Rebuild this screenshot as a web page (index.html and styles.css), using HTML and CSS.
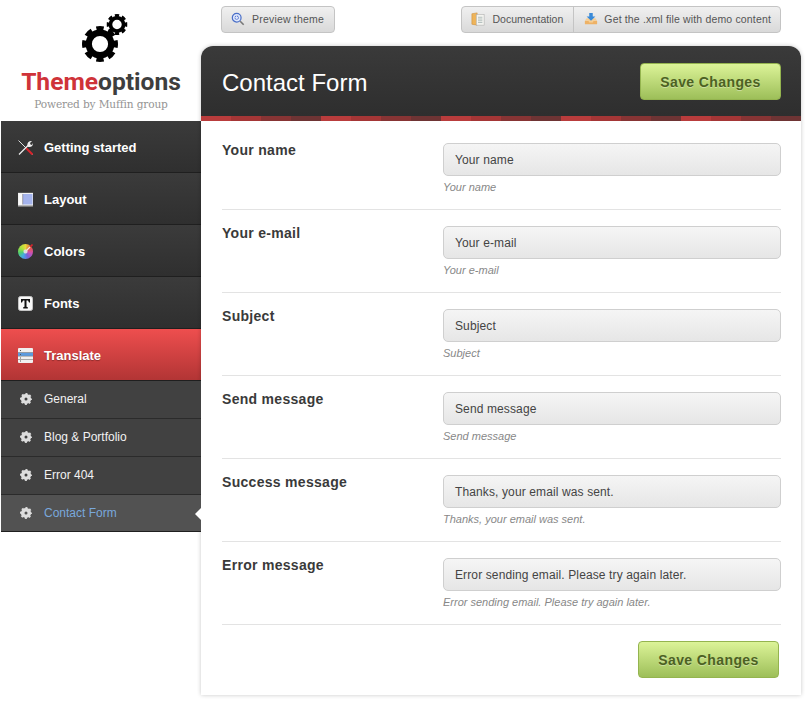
FILE: index.html
```html
<!DOCTYPE html>
<html lang="en">
<head>
<meta charset="utf-8">
<title>Theme options</title>
<link rel="stylesheet" href="styles.css">
</head>
<body>
<svg class="defs" width="0" height="0" aria-hidden="true">
  <defs>
    <symbol id="gear" viewBox="0 0 40 40">
      <circle cx="20" cy="20" r="12.5" fill="none" stroke="currentColor" stroke-width="7"/>
      <circle cx="20" cy="20" r="16.5" fill="none" stroke="currentColor" stroke-width="7" pathLength="80" stroke-dasharray="6 4" stroke-dashoffset="3"/>
    </symbol>
    <symbol id="subgear" viewBox="0 0 40 40">
      <circle cx="20" cy="20" r="11" fill="none" stroke="currentColor" stroke-width="12"/>
      <circle cx="20" cy="20" r="16.5" fill="none" stroke="currentColor" stroke-width="7" pathLength="80" stroke-dasharray="5 5" stroke-dashoffset="2.5"/>
    </symbol>
  </defs>
</svg>
<div class="page">
  <aside class="sidebar">
    <div class="logo">
      <svg class="logo-gears" width="60" height="52" viewBox="0 0 60 52">
        <use href="#gear" x="4" y="13" width="36" height="36"/>
        <use href="#gear" x="28.500" y="1" width="21" height="21"/>
      </svg>
      <div class="logo-name"><span class="logo-red">Theme</span>options</div>
      <div class="logo-sub">Powered by Muffin group</div>
    </div>
    <nav class="menu">
      <a class="item">
        <svg class="icon" viewBox="0 0 15 15"><path d="M.5.5l14 14" stroke="#ddd" stroke-width="1"/><path d="M8 8l6.500 6.500" stroke="#d8242c" stroke-width="2"/><path d="M1 14.500L10 5.500" stroke="#eee" stroke-width="1.300"/><path d="M9.500 6.500C8.500 3 11 .5 14 1l-2 2 .5 1.500L14 5l1-2c.500 3-2.500 5-5.500 3.500z" fill="#eee"/></svg>
        <span>Getting started</span>
      </a>
      <a class="item">
        <svg class="icon" viewBox="0 0 15 15"><rect width="15" height="15" fill="#f2f2f2"/><rect y="0" width="15" height="1" fill="#555"/><rect x="1" y="2" width="3.500" height="10.500" fill="#fafafa"/><rect x="5" y="2" width="9.500" height="10.500" fill="#a4b3ec"/><rect x="4.500" y="2" width=".6" height="10.500" fill="#667"/><rect y="13.500" width="15" height="1.500" fill="#777"/></svg>
        <span>Layout</span>
      </a>
      <a class="item">
        <span class="wheel">
          <svg class="brush" viewBox="0 0 15 15"><path d="M8 7l4.500-4.500" stroke="#f0e8d8" stroke-width="1.300"/><path d="M12 3l2.500-2.500" stroke="#d8242c" stroke-width="1.600"/></svg>
        </span>
        <span>Colors</span>
      </a>
      <a class="item">
        <svg class="icon" viewBox="0 0 15 15"><rect x=".5" y=".5" width="14" height="14" rx="2" fill="#f8f8f8" stroke="#c4c4c4"/><path d="M3 3h9v3.500h-1L10 4.500H8.500v6.300l1.300.5V12.500H5.200v-1.200l1.300-.5V4.500H5L4 6.500H3z" fill="#111"/></svg>
        <span>Fonts</span>
      </a>
      <a class="item item-active">
        <svg class="icon" viewBox="0 0 15 15"><rect width="15" height="15" rx="1" fill="#f0f0f0"/><rect y="4.500" width="15" height="3.500" fill="#5a9be0"/><path d="M0 4.500h15M0 8.200h15M0 11.500h15" stroke="#888" stroke-width=".7"/><path d="M2 2.500h1M2 6.500h1M2 10h1M2 13h1" stroke="#555"/></svg>
        <span>Translate</span>
      </a>
      <a class="sub"><svg class="sub-gear"><use href="#subgear"/></svg><span>General</span></a>
      <a class="sub"><svg class="sub-gear"><use href="#subgear"/></svg><span>Blog &amp; Portfolio</span></a>
      <a class="sub"><svg class="sub-gear"><use href="#subgear"/></svg><span>Error 404</span></a>
      <a class="sub sub-current"><svg class="sub-gear"><use href="#subgear"/></svg><span>Contact Form</span><i class="arrow"></i></a>
    </nav>
  </aside>

  <main class="content">
    <div class="topbar">
      <a class="tbtn">
        <svg class="ticon" viewBox="0 0 16 16"><circle cx="6.500" cy="6.500" r="5" fill="#dfe8fb" stroke="#4a6fc8" stroke-width="1.400"/><circle cx="6.500" cy="6.500" r="2" fill="none" stroke="#2a4fc0" stroke-dasharray="2 1"/><path d="M10.500 10.500l4 4" stroke="#777" stroke-width="1.800"/></svg>
        <span>Preview theme</span>
      </a>
      <div class="tgroup">
        <a class="tbtn tbtn-join">
          <svg class="ticon" viewBox="0 0 16 16"><path d="M1 2l6-1v14l-6-1z" fill="#eeb45a" stroke="#c98a35" stroke-width=".6"/><rect x="6" y="3" width="9" height="12" fill="#f4f4f0" stroke="#aaa" stroke-width=".6"/><path d="M8 6h5M8 8h5M8 10h5M8 12h5" stroke="#9aa" stroke-width=".8"/></svg>
          <span>Documentation</span>
        </a>
        <a class="tbtn tbtn-join">
          <svg class="ticon" viewBox="0 0 16 16"><path d="M1 10h14v4H1z" fill="#eeb266"/><path d="M3 7h10l2 3h-4l-1 2H6L5 10H1z" fill="#f6cf96"/><path d="M6 1h4v4h3l-5 5-5-5h3z" fill="#3a8ad8"/></svg>
          <span>Get the .xml file with demo content</span>
        </a>
      </div>
    </div>

    <section class="panel">
      <header class="phead">
        <h1>Contact Form</h1>
        <button class="save" type="button">Save Changes</button>
      </header>
      <div class="stripe"></div>
      <form class="form">
        <div class="row">
          <label>Your name</label>
          <div class="field"><div class="input">Your name</div><div class="hint">Your name</div></div>
        </div>
        <div class="row">
          <label>Your e-mail</label>
          <div class="field"><div class="input">Your e-mail</div><div class="hint">Your e-mail</div></div>
        </div>
        <div class="row">
          <label>Subject</label>
          <div class="field"><div class="input">Subject</div><div class="hint">Subject</div></div>
        </div>
        <div class="row">
          <label>Send message</label>
          <div class="field"><div class="input">Send message</div><div class="hint">Send message</div></div>
        </div>
        <div class="row">
          <label>Success message</label>
          <div class="field"><div class="input">Thanks, your email was sent.</div><div class="hint">Thanks, your email was sent.</div></div>
        </div>
        <div class="row">
          <label>Error message</label>
          <div class="field"><div class="input">Error sending email. Please try again later.</div><div class="hint">Error sending email. Please try again later.</div></div>
        </div>
        <div class="foot"><button class="save" type="button">Save Changes</button></div>
      </form>
    </section>
  </main>
</div>
</body>
</html>
```
FILE: styles.css
```css
* { box-sizing: border-box; }
html, body { margin: 0; padding: 0; background: #fff; }
body { font-family: "Liberation Sans", Arial, sans-serif; color: #333; }
.defs { position: absolute; }
.page { display: flex; align-items: flex-start; width: 808px; height: 703px; padding-left: 1px; overflow: hidden; }

.sidebar { width: 200px; flex: none; }
.logo { height: 121px; display: flex; flex-direction: column; align-items: center; }
.logo-gears { margin-top: 13px; margin-left: 14px; color: #000; display: block; }
.logo-name { font: 700 24.600px/28px Roboto, "Liberation Sans", sans-serif; color: #3e3e3e; margin-top: 3px; }
.logo-red { color: #cf3339; }
.logo-sub { font: 10.600px/14px "DejaVu Serif", serif; color: #949494; margin-top: 1px; letter-spacing: -0.15px; }

.menu { display: flex; flex-direction: column; }
.item { display: flex; align-items: center; gap: 11px; height: 52px; padding: 1px 0 0 17px; background: linear-gradient(#3b3b3b, #2f2f2f); border-bottom: 1px solid #1f1f1f; color: #fff; font-size: 13px; font-weight: 700; }
.item .icon { width: 15px; height: 15px; flex: none; }
.wheel { position: relative; width: 15px; height: 15px; flex: none; border-radius: 50%; background: radial-gradient(circle, #ddd 0 1.500px, transparent 2.500px), conic-gradient(#e8d93a, #e85a40, #d050b0, #7a60d8, #45a8e8, #50d070, #a8e040, #e8d93a); }
.brush { position: absolute; inset: 0; width: 15px; height: 15px; }
.item-active { background: linear-gradient(#ee4e4e, #b23535); text-shadow: 0 1px 1px rgba(0,0,0,.3); }
.sub { position: relative; display: flex; align-items: center; gap: 12px; height: 38px; padding: 0 0 1px 19px; background: #414141; border-bottom: 1px solid #2b2b2b; color: #f2f2f2; font-size: 12px; }
.sub-gear { width: 12px; height: 12px; color: #ddd; flex: none; }
.sub-current { background: #525252; color: #79a8dc; height: 37px; border-bottom-color: #1f1f1f; }
.arrow { position: absolute; right: 0; top: 13px; border: 6px solid transparent; border-right-color: #fff; border-left-width: 0; }

.content { width: 600px; flex: none; }
.topbar { height: 46px; padding: 6px 20px 0; display: flex; justify-content: space-between; align-items: flex-start; }
.tgroup { display: flex; border: 1px solid #c4c4c4; border-radius: 4px; background: linear-gradient(#f0f0f0, #d9d9d9); }
.tbtn { display: flex; align-items: center; gap: 7px; height: 27px; padding: 0 10px 1px 9px; border: 1px solid #c4c4c4; border-radius: 4px; background: linear-gradient(#f0f0f0, #d9d9d9); color: #555; font-size: 10.500px; letter-spacing: .2px; }
.tbtn-join { height: 25px; border: 0; border-radius: 0; background: none; letter-spacing: .02px; }
.tbtn-join + .tbtn-join { border-left: 1px solid #c4c4c4; gap: 6px; padding: 0 9px 1px 10px; letter-spacing: .16px; }
.ticon { width: 14px; height: 14px; flex: none; }

.panel { height: 649px; background: #fff; border-radius: 12px 12px 0 0; box-shadow: 0 0 4px rgba(0,0,0,.22); }
.phead { height: 70px; padding: 0 20px 0 21px; display: flex; align-items: center; justify-content: space-between; background: linear-gradient(#3a3a3a, #2e2e2e); border-radius: 12px 12px 0 0; }
.phead h1 { margin: 0; padding-top: 4px; font-size: 24px; font-weight: 400; color: #fff; }
.stripe { height: 5px; background: repeating-linear-gradient(90deg, #b93c3c 0 30px, #a53636 30px 60px, #873434 60px 90px, #6e3434 90px 120px); }
.save { width: 141px; height: 37px; border: 1px solid #94b44f; border-radius: 4px; background: linear-gradient(#dcf398, #9dbf59); color: #4c6123; font: 700 14px "Liberation Sans", sans-serif; letter-spacing: .4px; text-shadow: 0 1px 0 rgba(255,255,255,.35); padding: 1px 0 0; }

.form { padding: 6px 20px 0 21px; }
.row { display: flex; height: 83px; border-bottom: 1px solid #e3e3e3; padding-top: 16px; }
.row label { width: 221px; flex: none; margin-top: -1px; font-size: 14px; line-height: 16px; font-weight: 700; color: #3a3a3a; letter-spacing: .3px; }
.field { flex: 1; }
.input { height: 33px; border: 1px solid #cfcfcf; border-radius: 5px; background: linear-gradient(#f5f5f5, #e6e6e6); padding: 0 11px; font-size: 12px; line-height: 32px; color: #444; letter-spacing: .12px; }
.hint { margin-top: 5px; font-size: 11px; line-height: 13px; font-style: italic; color: #888; }
.foot { display: flex; justify-content: flex-end; padding: 16px 2px 0 0; }
```
